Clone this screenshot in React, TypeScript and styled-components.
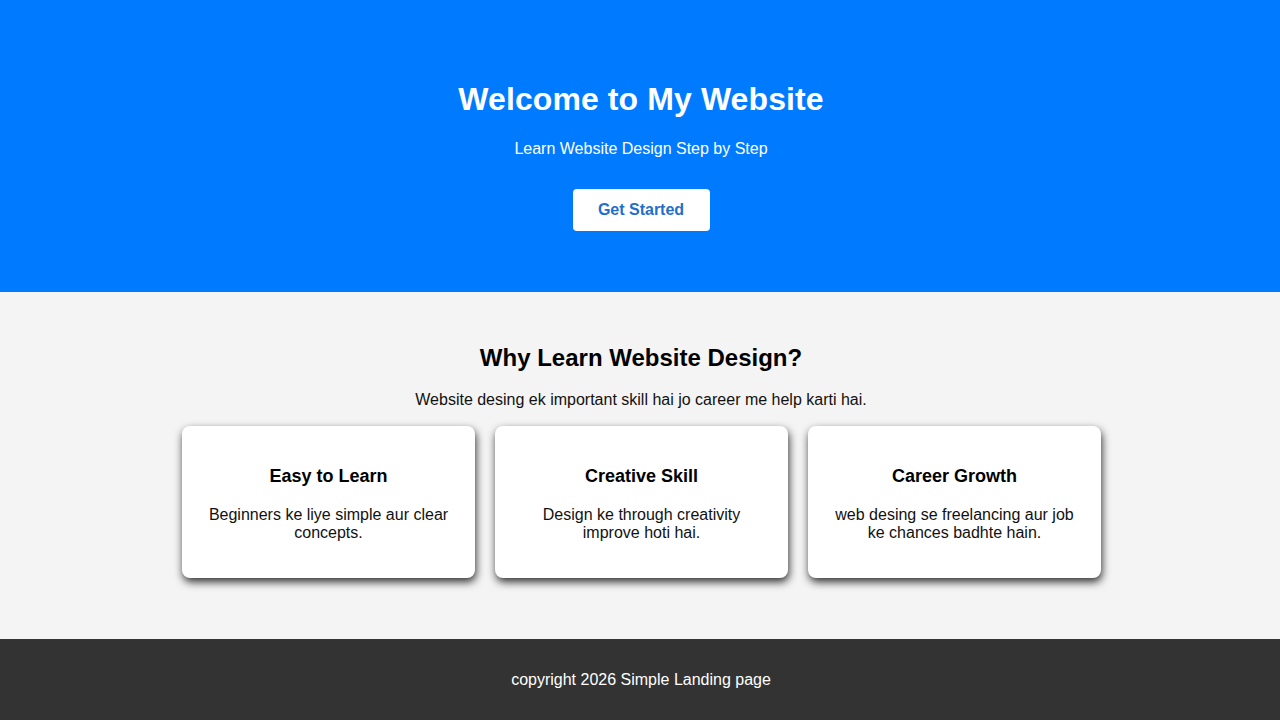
import React from "react";
import styled, { createGlobalStyle } from "styled-components";

const Global = createGlobalStyle`
  html, body { margin: 0; padding: 0; }
  body { font-family: "Liberation Sans", Arial, sans-serif; background: #f4f4f4; }
  * { box-sizing: border-box; }
`;

const Hero = styled.header`
  background: #007bff;
  color: #fff;
  text-align: center;
  height: 292px;
  padding: 81px 0 0 2px;
`;

const HeroTitle = styled.h1`
  margin: 0;
  font-size: 32px;
  line-height: 37px;
  font-weight: 700;
  letter-spacing: 0.1px;
`;

const HeroSub = styled.p`
  margin: 22px 0 0;
  font-size: 16px;
  line-height: 18px;
`;

const CtaButton = styled.button`
  margin-top: 31px;
  width: 137px;
  height: 42px;
  background: #fff;
  color: #1f6fcc;
  border: none;
  border-radius: 4px;
  font-family: "Liberation Sans", Arial, sans-serif;
  font-size: 16px;
  font-weight: 700;
  cursor: pointer;
`;

const Features = styled.section`
  background: #f4f4f4;
  text-align: center;
  height: 347px;
  padding: 52px 0 0 2px;
`;

const SectionTitle = styled.h2`
  margin: 0;
  font-size: 24px;
  line-height: 28px;
  font-weight: 700;
  color: #000;
`;

const SectionText = styled.p`
  margin: 19px 0 0;
  font-size: 16px;
  line-height: 18px;
  color: #111;
`;

const CardRow = styled.div`
  display: flex;
  justify-content: center;
  gap: 20px;
  margin-top: 17px;
  padding-left: 1px;
`;

const Card = styled.div`
  width: 293px;
  height: 152px;
  background: #fff;
  border-radius: 8px;
  padding: 40px 20px 0;
  box-shadow: 1px 4px 8px rgba(0, 0, 0, 0.8);
`;

const CardTitle = styled.h3`
  margin: 0;
  font-size: 18px;
  line-height: 21px;
  font-weight: 700;
  color: #000;
`;

const CardText = styled.p`
  margin: 19px 0 0;
  font-size: 16px;
  line-height: 18px;
  color: #111;
`;

const Footer = styled.footer`
  background: #333;
  color: #fff;
  text-align: center;
  height: 81px;
  padding: 32px 0 0 2px;
  font-size: 16px;
  line-height: 18px;
`;

const cards = [
  { title: "Easy to Learn", text: "Beginners ke liye simple aur clear concepts." },
  { title: "Creative Skill", text: "Design ke through creativity improve hoti hai." },
  { title: "Career Growth", text: "web desing se freelancing aur job ke chances badhte hain." },
];

export default function App() {
  return (
    <>
      <Global />
      <Hero>
        <HeroTitle>Welcome to My Website</HeroTitle>
        <HeroSub>Learn Website Design Step by Step</HeroSub>
        <CtaButton>Get Started</CtaButton>
      </Hero>
      <Features>
        <SectionTitle>Why Learn Website Design?</SectionTitle>
        <SectionText>Website desing ek important skill hai jo career me help karti hai.</SectionText>
        <CardRow>
          {cards.map((c) => (
            <Card key={c.title}>
              <CardTitle>{c.title}</CardTitle>
              <CardText>{c.text}</CardText>
            </Card>
          ))}
        </CardRow>
      </Features>
      <Footer>copyright 2026 Simple Landing page</Footer>
    </>
  );
}
